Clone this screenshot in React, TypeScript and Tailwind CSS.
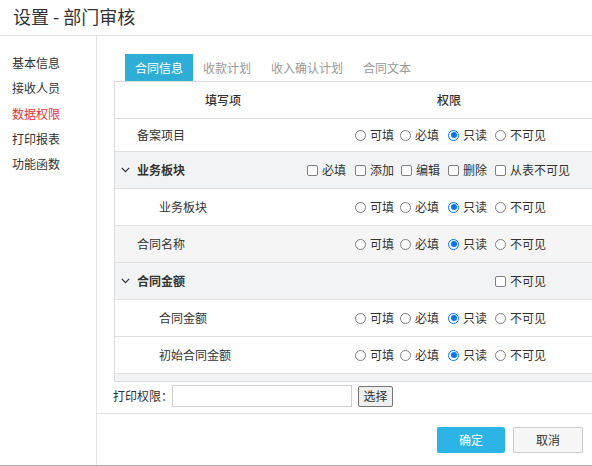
import React from "react";

const FONT = { fontFamily: '"Noto Sans CJK SC", "Noto Sans", sans-serif' };

function Radio({ checked }: { checked?: boolean }) {
  if (checked) {
    return (
      <span className="w-[11px] h-[11px] rounded-full border border-[#0a74f0] flex items-center justify-center shrink-0">
        <span className="w-[6px] h-[6px] rounded-full bg-[#0a74f0]" />
      </span>
    );
  }
  return <span className="w-[11px] h-[11px] rounded-full border border-[#808080] shrink-0 bg-white" />;
}

function Check() {
  return <span className="w-[11px] h-[11px] rounded-[2px] border border-[#808080] shrink-0 bg-white" />;
}

const RADIO_W = ["w-[45px]", "w-[48px]", "w-[47px]", ""];
const CHECK_W = ["w-[48px]", "w-[46px]", "w-[47px]", "w-[47px]", ""];

function RadioGroup() {
  const items = ["可填", "必填", "只读", "不可见"];
  return (
    <div className="flex items-center">
      {items.map((t, i) => (
        <div key={t} className={`flex items-center ${RADIO_W[i]}`}>
          <Radio checked={t === "只读"} />
          <span className="ml-[4px] text-[12px] text-[#333]">{t}</span>
        </div>
      ))}
    </div>
  );
}

function Chevron() {
  return (
    <svg width="9" height="6" viewBox="0 0 9 6" className="shrink-0">
      <polyline points="0.8,0.8 4.5,4.6 8.2,0.8" fill="none" stroke="#333" strokeWidth="1.2" />
    </svg>
  );
}

function FieldRow({ name, indent, bg, h = "h-[37px]" }: { name: string; indent?: boolean; bg?: string; h?: string }) {
  return (
    <div className={`flex items-center shrink-0 ${h} border-b border-[#e1e1e1] ${bg ?? "bg-white"}`}>
      <div className={`w-[216px] shrink-0 text-[12px] text-[#333] ${indent ? "pl-[44px]" : "pl-[22px]"}`}>{name}</div>
      <div className="w-[236px] shrink-0 flex pl-[24px]">
        <RadioGroup />
      </div>
    </div>
  );
}

function GroupRow({ name, items, hidden }: { name: string; items: string[]; hidden?: number }) {
  return (
    <div className="flex items-center shrink-0 h-[37px] border-b border-[#e1e1e1] bg-[#f1f3f4]">
      <div className="w-[192px] shrink-0 flex items-center pl-[6px]">
        <Chevron />
        <span className="ml-[7px] text-[12px] font-bold text-[#333]">{name}</span>
      </div>
      <div className="flex items-center">
        {items.map((t, i) => (
          <div
            key={t}
            className={`flex items-center ${CHECK_W[i]} ${hidden !== undefined && i < hidden ? "invisible" : ""}`}
          >
            <Check />
            <span className="ml-[4px] text-[12px] text-[#333]">{t}</span>
          </div>
        ))}
      </div>
    </div>
  );
}

export default function App() {
  const sidebar = ["基本信息", "接收人员", "数据权限", "打印报表", "功能函数"];
  const tabs = ["合同信息", "收款计划", "收入确认计划", "合同文本"];
  return (
    <div className="w-[592px] h-[466px] overflow-hidden bg-white flex flex-col" style={FONT}>
      <div className="h-[36px] shrink-0 border-b border-[#e3e3e3] flex items-center pl-[13px] pb-[3px]">
        <span className="text-[18px] text-[#333] leading-none">设置 - 部门审核</span>
      </div>
      <div className="flex h-[429px] shrink-0">
        <div className="w-[97px] shrink-0 border-r border-[#e3e3e3] pt-[14px]">
          {sidebar.map((s) => (
            <div
              key={s}
              className={`h-[25.3px] leading-[25.3px] pl-[12px] text-[12px] ${s === "数据权限" ? "text-[#e2363a]" : "text-[#333]"}`}
            >
              {s}
            </div>
          ))}
        </div>
        <div className="flex-1 flex flex-col min-w-0">
          <div className="h-[377px] shrink-0 pt-[18px] pl-[17px]">
            <div className="flex h-[27px] ml-[11px]">
              {tabs.map((t, i) => (
                <div
                  key={t}
                  className={`px-[10px] flex items-center text-[12px] ${i === 0 ? "bg-[#2eaed6] text-white" : "text-[#999]"}`}
                >
                  {t}
                </div>
              ))}
            </div>
            <div className="w-[500px] h-[301px] border border-[#dcdcdc] overflow-hidden flex flex-col">
              <div className="flex items-center h-[37px] shrink-0 border-b border-[#e1e1e1]">
                <div className="w-[216px] shrink-0 text-center text-[12px] font-medium text-[#333]">填写项</div>
                <div className="w-[236px] shrink-0 text-center text-[12px] font-medium text-[#333]">权限</div>
              </div>
              <FieldRow name="备案项目" h="h-[33px]" />
              <GroupRow name="业务板块" items={["必填", "添加", "编辑", "删除", "从表不可见"]} />
              <FieldRow name="业务板块" indent />
              <FieldRow name="合同名称" bg="bg-[#f5f5f5]" />
              <GroupRow name="合同金额" items={["必填", "添加", "编辑", "删除", "不可见"]} hidden={4} />
              <FieldRow name="合同金额" indent />
              <FieldRow name="初始合同金额" indent />
              <div className="h-[37px] shrink-0 bg-[#f1f3f4]" />
            </div>
            <div className="flex items-center mt-[3px] h-[22px] -ml-[1px]">
              <span className="w-[59px] shrink-0 text-[12px] text-[#333] whitespace-nowrap">打印权限：</span>
              <div className="w-[180px] h-[22px] border border-[#cfcfcf] bg-white" />
              <button className="ml-[6px] w-[35px] h-[21px] border border-[#767676] bg-[#efefef] rounded-[2px] text-[12px] text-[#333] flex items-center justify-center">
                选择
              </button>
            </div>
          </div>
          <div className="flex-1 border-t border-[#e3e3e3] flex justify-end items-start pt-[13px] pr-[9px] gap-[8px]">
            <button className="w-[68px] h-[26px] bg-[#2db4e6] text-white text-[12px] rounded-[2px] flex items-center justify-center">
              确定
            </button>
            <button className="w-[70px] h-[26px] bg-[#f7f7f7] border border-[#cccccc] text-[#333] text-[12px] rounded-[2px] flex items-center justify-center">
              取消
            </button>
          </div>
        </div>
      </div>
      <div className="h-[1px] bg-[#a9a9a9] shrink-0" />
    </div>
  );
}
